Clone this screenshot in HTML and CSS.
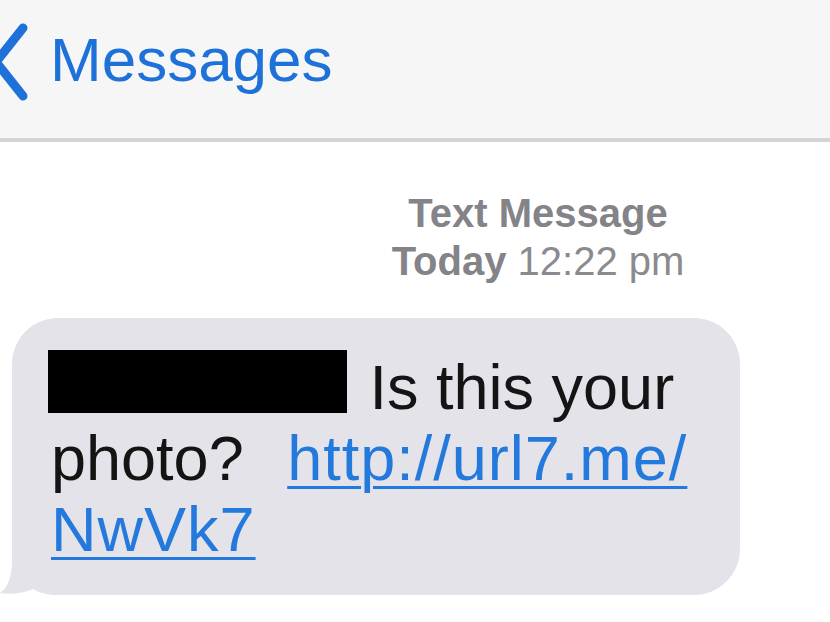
FILE: index.html
```html
<!DOCTYPE html>
<html lang="en">
<head>
  <meta charset="UTF-8" />
  <meta name="viewport" content="width=device-width, initial-scale=1.0"/>
  <title>Messages</title>
  <link rel="stylesheet" href="styles.css">
</head>
<body>
  <div class="nav-bar">
    <svg class="back-icon" viewBox="0 0 36 138" width="36" height="138">
      <polyline points="23,28 -4,62 23,96" />
    </svg>
    <div class="nav-title">Messages</div>
  </div>

  <div class="thread">
    <div class="timestamp">
      <div><b>Text Message</b></div>
      <div><b>Today</b> 12:22 pm</div>
    </div>

    <div class="bubble">
      <!-- tail sits behind the text, over the corner of the bubble -->
      <svg class="tail" viewBox="0 0 60 80" width="60" height="80">
        <path d="M12 0 L12 45 C12 62 8 72 0 78 C12 80 24 78 33 74 C40 78 48 80 60 80 L60 0 Z" />
      </svg>
      <span class="redacted"></span> Is this your photo? <a class="link" href="#">http://url7.me/<wbr>NwVk7</a>
    </div>
  </div>
</body>
</html>
```

FILE: styles.css
```css
body {
  margin: 0;
  padding: 0;
  background-color: #ffffff;
  font-family: 'Liberation Sans', Arial, sans-serif;
  overflow: hidden;
}

.nav-bar {
  display: flex;
  align-items: flex-start;
  height: 138px;
  background-color: #f6f6f6;
  border-bottom: 4px solid #d4d4d4;
}

.back-icon {
  flex: none;
  overflow: visible;
}

.back-icon polyline {
  fill: none;
  stroke: #1d71d8;
  stroke-width: 9;
  stroke-linecap: round;
  stroke-linejoin: miter;
}

.nav-title {
  margin-left: 14px;
  padding-top: 24px;
  font-size: 62px;
  line-height: 72px;
  color: #1d71d8;
}

.thread {
  display: flex;
  flex-direction: column;
  align-items: flex-start;
}

.timestamp {
  box-sizing: border-box;
  width: 100%;
  margin-top: 47px;
  padding-left: 246px;
  text-align: center;
  font-size: 40px;
  line-height: 48px;
  color: #8a8a8f;
}

.timestamp b {
  color: #838388;
}

.bubble {
  position: relative;
  z-index: 0;
  box-sizing: border-box;
  width: 728px;
  margin: 33px 0 0 12px;
  padding: 32px 36px 30px 39px;
  background-color: #e4e3ea;
  border-radius: 46px;
  font-size: 63px;
  line-height: 71px;
  color: #141414;
}

.tail {
  position: absolute;
  left: -12px;
  bottom: 0;
  z-index: -1;
}

.tail path {
  fill: #e4e3ea;
}

.redacted {
  display: inline-block;
  width: 299px;
  height: 63px;
  margin: 0 5px 0 -3px;
  vertical-align: -4px;
  background-color: #000000;
}

.link {
  margin-left: 26px;
  color: #2479dc;
  letter-spacing: 1px;
  text-decoration: underline;
  text-decoration-thickness: 3px;
  text-underline-offset: 6px;
}
```
